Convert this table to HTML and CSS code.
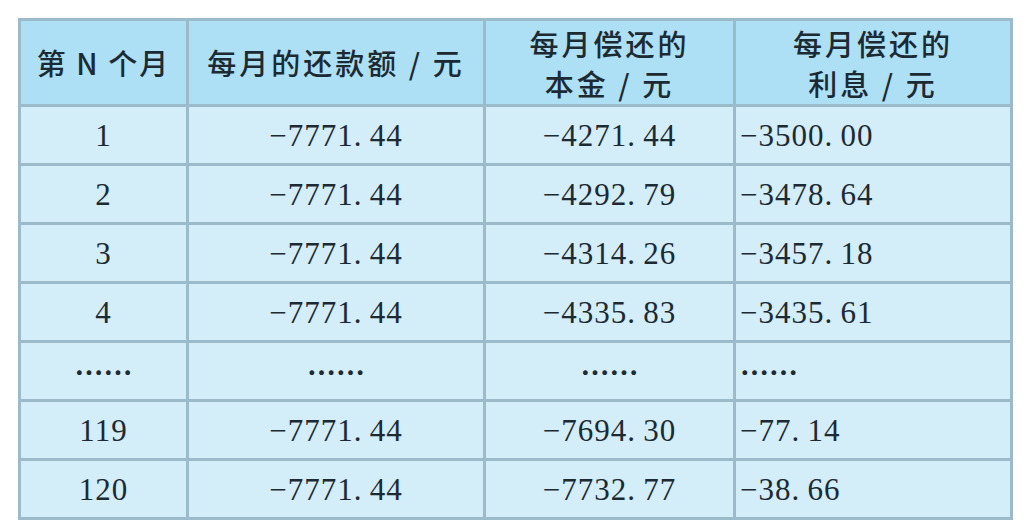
FILE: index.html
```html
<!DOCTYPE html>
<html lang="zh-CN">
<head>
<meta charset="utf-8">
<title>等额本息还款表</title>
<link rel="stylesheet" href="styles.css">
</head>
<body>
<div class="sheet" role="table">
  <div class="cell head tight" role="columnheader">第 N 个月</div>
  <div class="cell head" role="columnheader">每月的还款额 / 元</div>
  <div class="cell head wide" role="columnheader"><span>每月偿还的</span><span>本金 / 元</span></div>
  <div class="cell head wide" role="columnheader"><span>每月偿还的</span><span>利息 / 元</span></div>

  <div class="cell num">1</div>
  <div class="cell num">−7771.&#8201;44</div>
  <div class="cell num">−4271.&#8201;44</div>
  <div class="cell num left">−3500.&#8201;00</div>

  <div class="cell num">2</div>
  <div class="cell num">−7771.&#8201;44</div>
  <div class="cell num">−4292.&#8201;79</div>
  <div class="cell num left">−3478.&#8201;64</div>

  <div class="cell num">3</div>
  <div class="cell num">−7771.&#8201;44</div>
  <div class="cell num">−4314.&#8201;26</div>
  <div class="cell num left">−3457.&#8201;18</div>

  <div class="cell num">4</div>
  <div class="cell num">−7771.&#8201;44</div>
  <div class="cell num">−4335.&#8201;83</div>
  <div class="cell num left">−3435.&#8201;61</div>

  <div class="cell dots">……</div>
  <div class="cell dots">……</div>
  <div class="cell dots">……</div>
  <div class="cell dots left">……</div>

  <div class="cell num">119</div>
  <div class="cell num">−7771.&#8201;44</div>
  <div class="cell num">−7694.&#8201;30</div>
  <div class="cell num left">−77.&#8201;14</div>

  <div class="cell num">120</div>
  <div class="cell num">−7771.&#8201;44</div>
  <div class="cell num">−7732.&#8201;77</div>
  <div class="cell num left">−38.&#8201;66</div>
</div>
</body>
</html>
```

FILE: styles.css
```css
html, body {
  margin: 0;
  padding: 0;
  background: #ffffff;
}

body {
  padding: 18px 0 0 18px;
  color: #1c2a33;
}

.sheet {
  display: grid;
  grid-template-columns: 168px 297px 250px 277px;
  grid-template-rows: 86px repeat(7, 59px);
  width: max-content;
  border-top: 3px solid #9cbbca;
  border-left: 3px solid #9cbbca;
  background: #d3edf9;
}

.cell {
  box-sizing: border-box;
  border-right: 3px solid #9cbbca;
  border-bottom: 3px solid #9cbbca;
  display: flex;
  align-items: center;
  justify-content: center;
  white-space: pre;
}

.head {
  background: #ade0f5;
  font-family: "Noto Sans CJK SC", "Noto Sans", sans-serif;
  font-size: 29px;
  font-weight: 500;
  letter-spacing: 3px;
  padding-bottom: 2px;
}

.head.tight {
  letter-spacing: 2px;
}

.head.wide {
  flex-direction: column;
  line-height: 40px;
  padding-top: 2px;
}

.num {
  font-family: "Liberation Serif", "Times New Roman", serif;
  font-size: 31px;
  letter-spacing: 1px;
  padding-top: 1px;
}

.dots {
  font-family: "Noto Sans CJK SC", sans-serif;
  font-size: 29px;
  font-weight: bold;
}

.left {
  justify-content: flex-start;
  padding-left: 4px;
}
```
